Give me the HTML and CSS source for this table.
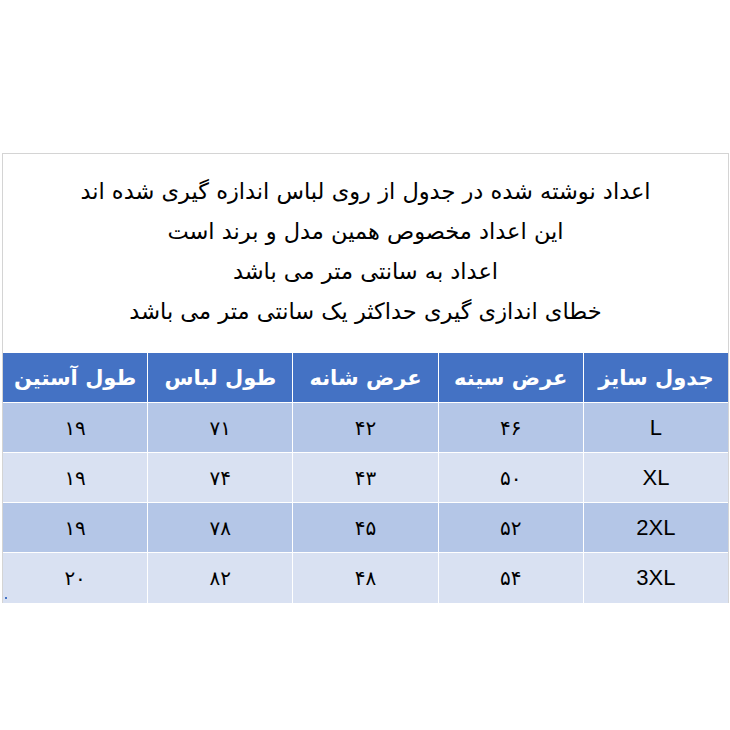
FILE: index.html
```html
<!DOCTYPE html>
<html lang="fa">
<head>
<meta charset="utf-8">
<link rel="stylesheet" href="styles.css">
</head>
<body>
<div class="page">
  <div class="sheet">
    <div class="notes" dir="rtl">
      <p>اعداد نوشته شده در جدول از روی لباس اندازه گیری شده اند</p>
      <p>این اعداد مخصوص همین مدل و برند است</p>
      <p>اعداد به سانتی متر می باشد</p>
      <p>خطای اندازی گیری حداکثر یک سانتی متر می باشد</p>
    </div>
    <div class="table" dir="rtl">
      <div class="cell head">جدول سایز</div>
      <div class="cell head">عرض سینه</div>
      <div class="cell head">عرض شانه</div>
      <div class="cell head">طول لباس</div>
      <div class="cell head">طول آستین</div>

      <div class="cell odd latin">L</div>
      <div class="cell odd">۴۶</div>
      <div class="cell odd">۴۲</div>
      <div class="cell odd">۷۱</div>
      <div class="cell odd">۱۹</div>

      <div class="cell even latin">XL</div>
      <div class="cell even">۵۰</div>
      <div class="cell even">۴۳</div>
      <div class="cell even">۷۴</div>
      <div class="cell even">۱۹</div>

      <div class="cell odd latin">2XL</div>
      <div class="cell odd">۵۲</div>
      <div class="cell odd">۴۵</div>
      <div class="cell odd">۷۸</div>
      <div class="cell odd">۱۹</div>

      <div class="cell even latin">3XL</div>
      <div class="cell even">۵۴</div>
      <div class="cell even">۴۸</div>
      <div class="cell even">۸۲</div>
      <div class="cell even">۲۰</div>
    </div>
    <span class="handle"></span>
  </div>
</div>
</body>
</html>
```
FILE: styles.css
```css
html, body {
  margin: 0;
  padding: 0;
  background: #ffffff;
}
.page {
  width: 730px;
  height: 730px;
  padding-top: 153px;
  box-sizing: border-box;
}
.sheet {
  position: relative;
  margin-left: 2px;
  width: 725px;
  border-top: 1px solid #d4d4d4;
  border-left: 1px solid #d4d4d4;
  border-right: 1px solid #d4d4d4;
}
.notes {
  height: 198px;
  box-sizing: border-box;
  padding-top: 17px;
  text-align: center;
  font-family: "DejaVu Sans", sans-serif;
  font-size: 22.5px;
  color: #000;
}
.notes p {
  margin: 0;
  height: 40px;
  line-height: 40px;
}
.table {
  display: grid;
  grid-template-columns: repeat(5, 1fr);
  grid-template-rows: 49px 49px 49px 49px 50px;
  background: #ffffff;
  gap: 1px;
  border-top: 1px solid #ffffff;
}
.cell {
  display: flex;
  align-items: center;
  justify-content: center;
  font-family: "DejaVu Sans", sans-serif;
  font-size: 20px;
  color: #000;
}
.head {
  background: #4472c4;
  color: #ffffff;
  font-weight: bold;
  font-size: 21px;
}
.odd {
  background: #b4c6e7;
}
.even {
  background: #d9e1f2;
}
.latin {
  font-family: "Liberation Sans", Arial, sans-serif;
  font-size: 22px;
}
.handle {
  position: absolute;
  left: 2px;
  bottom: 4px;
  width: 2px;
  height: 2px;
  background: #4472c4;
}
```
